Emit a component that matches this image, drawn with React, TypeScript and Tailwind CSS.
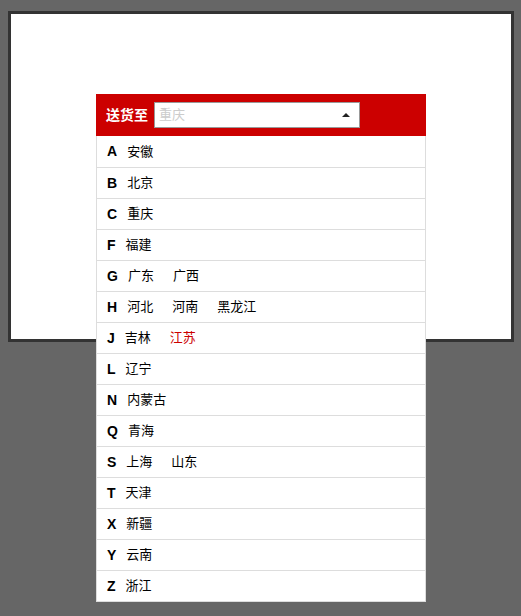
import React from 'react';

interface Group {
  letter: string;
  names: string[];
}

const groups: Group[] = [
  { letter: 'A', names: ['安徽'] },
  { letter: 'B', names: ['北京'] },
  { letter: 'C', names: ['重庆'] },
  { letter: 'F', names: ['福建'] },
  { letter: 'G', names: ['广东', '广西'] },
  { letter: 'H', names: ['河北', '河南', '黑龙江'] },
  { letter: 'J', names: ['吉林', '江苏'] },
  { letter: 'L', names: ['辽宁'] },
  { letter: 'N', names: ['内蒙古'] },
  { letter: 'Q', names: ['青海'] },
  { letter: 'S', names: ['上海', '山东'] },
  { letter: 'T', names: ['天津'] },
  { letter: 'X', names: ['新疆'] },
  { letter: 'Y', names: ['云南'] },
  { letter: 'Z', names: ['浙江'] },
];

// highlighted province (hover state in the shot)
const active = '江苏';

function App() {
  return (
    <div
      className="min-h-screen bg-[#666] pl-[8px] pt-[11px]"
      style={{ fontFamily: '"Liberation Sans", "Noto Sans CJK SC", sans-serif' }}
    >
      <div className="relative w-[506px] h-[331px] border-[3px] border-[#333] bg-white">
        {/* dropdown panel, hangs out of the box */}
        <div className="absolute left-[85px] top-[80px] w-[330px] z-10">
          <div className="h-[42px] bg-[#cc0000] flex items-center pl-[10px]">
            <span className="text-white font-bold text-[14px] leading-none">送货至</span>
            <div className="ml-[6px] w-[206px] h-[26px] bg-white border border-[#999] flex items-center justify-between pl-[4px] pr-[9px]">
              <span className="text-[#ccc] text-[13px]">重庆</span>
              <span className="w-0 h-0 border-l-[4px] border-r-[4px] border-b-[4px] border-l-transparent border-r-transparent border-b-[#222]" />
            </div>
          </div>
          <ul className="bg-white border-x border-b border-[#ddd]">
            {groups.map((g, i) => (
              <li
                key={g.letter}
                className={`h-[31px] flex items-center pl-[10px] ${i > 0 ? 'border-t border-[#ddd]' : ''}`}
              >
                <span className="font-bold text-[14px] text-black mr-[10px]">{g.letter}</span>
                {g.names.map((n) => (
                  <span
                    key={n}
                    className={`text-[13px] mr-[19px] ${n === active ? 'text-[#cc0000]' : 'text-black'}`}
                  >
                    {n}
                  </span>
                ))}
              </li>
            ))}
          </ul>
        </div>
      </div>
    </div>
  );
}

export default App;
